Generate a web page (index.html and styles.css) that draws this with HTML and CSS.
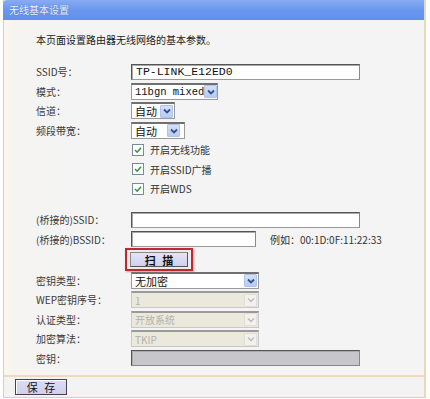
FILE: index.html
```html
<!DOCTYPE html>
<html lang="zh-CN">
<head>
<meta charset="utf-8">
<title>无线基本设置</title>
<link rel="stylesheet" href="styles.css">
</head>
<body>
<div class="panel">
  <div class="titlebar">无线基本设置</div>
  <div class="content">
    <p class="intro">本页面设置路由器无线网络的基本参数。</p>
    <div class="form">
      <div class="label">SSID号：</div>
      <div class="field"><span class="input mono w-long">TP-LINK_E12ED0</span></div>

      <div class="label">模式：</div>
      <div class="field"><span class="select w-mode"><span class="val mono">11bgn mixed</span><span class="arrow"><svg viewBox="0 0 10 10"><path d="M2 3.5 L5 6.5 L8 3.5" fill="none" stroke="#34508a" stroke-width="1.8"/></svg></span></span></div>

      <div class="label">信道：</div>
      <div class="field"><span class="select w-ch"><span class="val">自动</span><span class="arrow"><svg viewBox="0 0 10 10"><path d="M2 3.5 L5 6.5 L8 3.5" fill="none" stroke="#34508a" stroke-width="1.8"/></svg></span></span></div>

      <div class="label">频段带宽：</div>
      <div class="field"><span class="select w-bw"><span class="val">自动</span><span class="arrow"><svg viewBox="0 0 10 10"><path d="M2 3.5 L5 6.5 L8 3.5" fill="none" stroke="#34508a" stroke-width="1.8"/></svg></span></span></div>

      <div class="label"></div>
      <div class="field"><span class="check"><svg viewBox="0 0 10 10"><path d="M2 5 L4.2 7.2 L8 2.8" fill="none" stroke="#2e9a3a" stroke-width="1.6"/></svg></span><span class="cbtext">开启无线功能</span></div>

      <div class="label"></div>
      <div class="field"><span class="check"><svg viewBox="0 0 10 10"><path d="M2 5 L4.2 7.2 L8 2.8" fill="none" stroke="#2e9a3a" stroke-width="1.6"/></svg></span><span class="cbtext">开启SSID广播</span></div>

      <div class="label"></div>
      <div class="field"><span class="check"><svg viewBox="0 0 10 10"><path d="M2 5 L4.2 7.2 L8 2.8" fill="none" stroke="#2e9a3a" stroke-width="1.6"/></svg></span><span class="cbtext">开启WDS</span></div>

      <div class="spacer"></div>

      <div class="label">(桥接的)SSID：</div>
      <div class="field"><span class="input w-long"></span></div>

      <div class="label">(桥接的)BSSID：</div>
      <div class="field"><span class="input w-bssid"></span><span class="hint">例如：00:1D:0F:11:22:33</span></div>

      <div class="label scanrow"></div>
      <div class="field scanrow"><span class="redbox"><span class="btn scan">扫&nbsp;描</span></span></div>

      <div class="label">密钥类型：</div>
      <div class="field"><span class="select w-key"><span class="val">无加密</span><span class="arrow"><svg viewBox="0 0 10 10"><path d="M2 3.5 L5 6.5 L8 3.5" fill="none" stroke="#34508a" stroke-width="1.8"/></svg></span></span></div>

      <div class="label">WEP密钥序号：</div>
      <div class="field"><span class="select w-key disabled"><span class="val">1</span><span class="arrow"><svg viewBox="0 0 10 10"><path d="M2 3.5 L5 6.5 L8 3.5" fill="none" stroke="#bbbbbb" stroke-width="1.4"/></svg></span></span></div>

      <div class="label">认证类型：</div>
      <div class="field"><span class="select w-key disabled"><span class="val">开放系统</span><span class="arrow"><svg viewBox="0 0 10 10"><path d="M2 3.5 L5 6.5 L8 3.5" fill="none" stroke="#bbbbbb" stroke-width="1.4"/></svg></span></span></div>

      <div class="label">加密算法：</div>
      <div class="field"><span class="select w-key disabled"><span class="val">TKIP</span><span class="arrow"><svg viewBox="0 0 10 10"><path d="M2 3.5 L5 6.5 L8 3.5" fill="none" stroke="#bbbbbb" stroke-width="1.4"/></svg></span></span></div>

      <div class="label">密钥：</div>
      <div class="field"><span class="input w-long keyinput"></span></div>
    </div>
  </div>
  <div class="footer"><span class="btn save">保&nbsp;存</span></div>
</div>
</body>
</html>
```

FILE: styles.css
```css
* { box-sizing: border-box; }
html, body { margin: 0; padding: 0; background: #ffffff; }
body {
  width: 430px;
  height: 399px;
  overflow: hidden;
  font-family: "Noto Sans CJK SC", "Noto Sans", sans-serif;
  font-size: 10px;
  color: #333;
}
.panel {
  margin-left: 3px;
  width: 423px;
  height: 398px;
  border-left: 1px solid #e2cfa9;
  border-right: 2px solid #ead9b8;
  border-bottom: 1px solid #e2cfa9;
  background: #f4f4f3;
  display: flex;
  flex-direction: column;
}
.titlebar {
  height: 20px;
  background: linear-gradient(to bottom, #88acf3 0%, #6a97ee 50%, #5f8eee 100%);
  border-top-left-radius: 4px;
  color: #eef3ff;
  text-shadow: 0 0 1px #3a63b8;
  font-size: 10px;
  line-height: 20px;
  padding-left: 6px;
  margin-left: -1px;
}
.content {
  flex: 1;
  background: linear-gradient(to right, #fbf7ee 0, #f5f4f1 10px, #f4f4f4 60px);
}
.intro {
  margin: 13px 0 0 32px;
  line-height: 14px;
  color: #222;
  font-size: 10px;
}
.form {
  margin-top: 15px;
  padding-left: 32px;
  display: grid;
  grid-template-columns: 95px 1fr;
}
.label, .field { height: 19.5px; }
.label {
  display: flex;
  align-items: center;
  color: #3a3a3a;
  font-size: 10px;
  white-space: nowrap;
}
.field {
  display: flex;
  align-items: center;
}
.spacer { grid-column: 1 / 3; height: 11.5px; }
.label.scanrow, .field.scanrow { height: 21.5px; }
.mono { font-family: "Liberation Mono", "DejaVu Sans Mono", monospace; }
.input {
  display: inline-flex;
  align-items: center;
  height: 16px;
  background: #fff;
  border: 1px solid #555;
  border-right-color: #888;
  border-bottom-color: #999;
  box-shadow: inset 1px 1px 0 #aaa;
  padding-left: 4px;
  font-size: 11.5px;
  color: #111;
}
.w-long { width: 229px; }
.w-bssid { width: 125px; }
.keyinput { background: #c6c6cb; border-color: #555 #888 #888 #555; }
.hint { margin-left: 14px; color: #333; font-size: 10px; }
.select {
  display: inline-flex;
  align-items: center;
  justify-content: space-between;
  height: 17px;
  background: #fff;
  border: 1px solid #9a9a9a;
  border-top: 2px solid #707070;
  padding: 0 1px 0 3px;
  font-size: 11px;
  color: #111;
}
.select .val { white-space: nowrap; }
.select .mono { font-size: 10.5px; }
.arrow {
  flex: none;
  width: 13px;
  height: 13px;
  background: linear-gradient(#d3e0f9, #b7cbf3);
  border: 1px solid #aec2ea;
  border-radius: 1px;
  display: inline-flex;
  align-items: center;
  justify-content: center;
}
.arrow svg { width: 10px; height: 10px; }
.w-mode { width: 87px; }
.w-ch { width: 44px; }
.w-bw { width: 54px; padding-right: 4px; }
.w-key { width: 128px; }
.select.disabled {
  background: #ebe8dc;
  border-color: #c8c8c8;
  border-top-color: #9a9a9a;
  color: #b5b2a8;
  font-size: 10px;
}
.select.disabled .arrow {
  background: #f2f1ec;
  border-color: #e0ded6;
}
.check {
  width: 12px;
  height: 12px;
  margin-left: 1px;
  background: #fff;
  border: 1px solid #7a8a9a;
  display: inline-flex;
  align-items: center;
  justify-content: center;
}
.check svg { width: 10px; height: 10px; }
.cbtext { margin-left: 6px; color: #333; font-size: 10px; }
.field.scanrow { margin-left: -6px; }
.redbox {
  display: inline-flex;
  padding: 2px 3px;
  border: 2px solid #c3262c;
  box-shadow: 1px 1px 2px rgba(120,0,0,0.35);
  background: #efeaf0;
}
.btn {
  display: inline-flex;
  align-items: center;
  justify-content: center;
  background: linear-gradient(#e4e4f8, #d0d0ee);
  border: 1px solid #555;
  border-top-color: #888;
  border-left-color: #888;
  color: #111;
  font-size: 11px;
  font-weight: bold;
  letter-spacing: 2px;
}
.scan { width: 58px; height: 15px; padding-left: 2px; }
.footer {
  height: 22px;
  border-top: 2px solid #efd9b9;
  background: #f3f3f3;
  display: flex;
  align-items: center;
  padding-left: 11px;
}
.save {
  width: 52px;
  height: 16px;
  font-weight: normal;
  font-size: 11px;
  padding-left: 2px;
  background: linear-gradient(#dcdcf3, #cfd0ee);
  border: 1px solid #444;
  box-shadow: inset 1px 1px 0 #fff;
}
```
